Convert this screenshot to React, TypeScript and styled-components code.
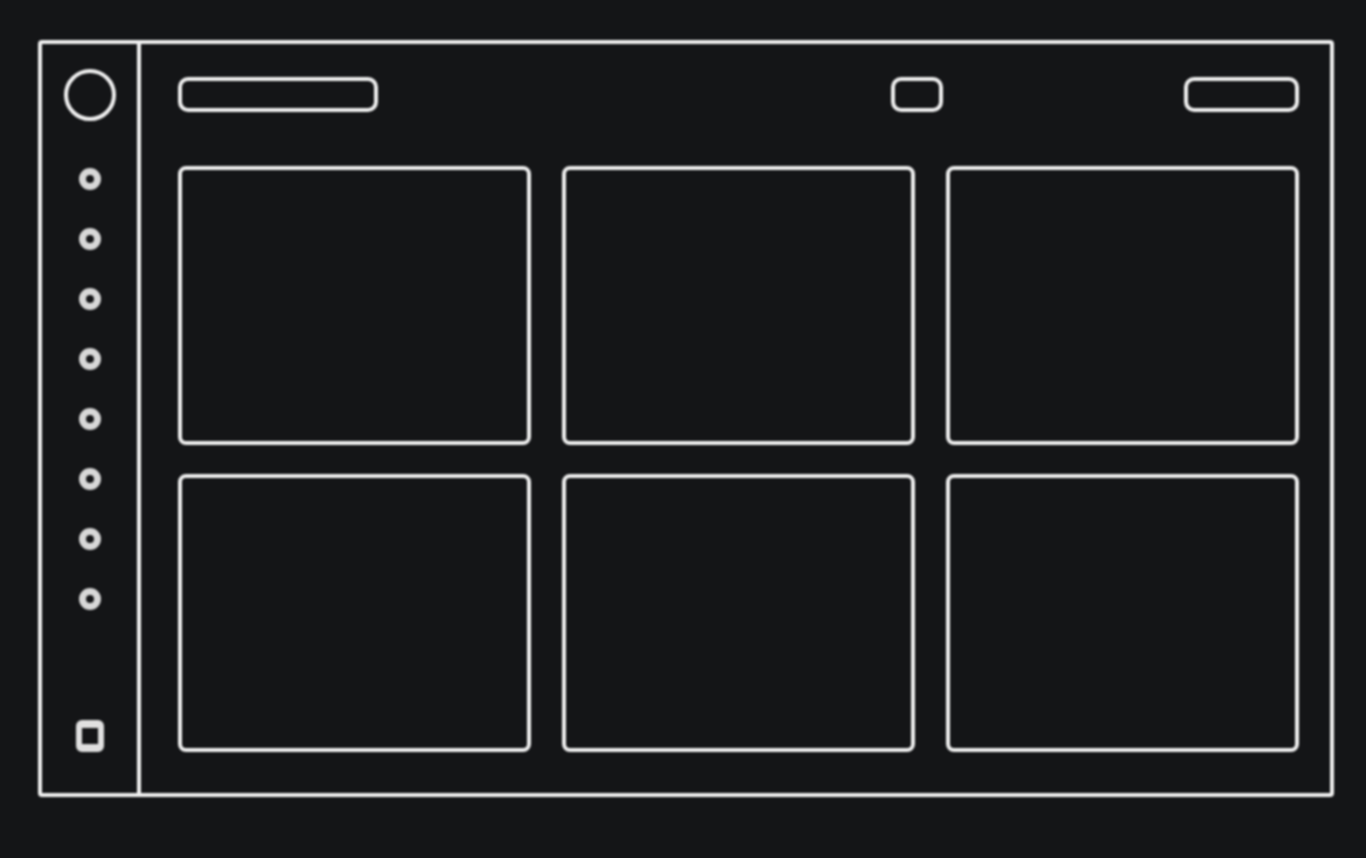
import React from 'react';
import styled, { createGlobalStyle } from 'styled-components';

const GlobalStyle = createGlobalStyle`
  html, body {
    margin: 0;
    padding: 0;
    background: #141517;
    font-family: "Liberation Sans", Arial, sans-serif;
  }
`;

const line = '#f0f0f0';

const Page = styled.div`
  width: 1366px;
  height: 858px;
  box-sizing: border-box;
  padding: 40px 32px 0 38px;
  background: #141517;
`;

const Frame = styled.div`
  width: 1296px;
  height: 757px;
  box-sizing: border-box;
  display: flex;
  border: 4px solid ${line};
  border-radius: 4px;
  filter: blur(0.8px);
`;

const Sidebar = styled.nav`
  width: 99px;
  flex-shrink: 0;
  box-sizing: border-box;
  border-right: 4px solid ${line};
  display: flex;
  flex-direction: column;
  align-items: center;
  padding: 25px 0 41px;
`;

const Avatar = styled.div`
  width: 52px;
  height: 52px;
  box-sizing: border-box;
  border-radius: 50%;
  border: 4px solid ${line};
  margin-bottom: 47px;
`;

const NavList = styled.div`
  display: flex;
  flex-direction: column;
  gap: 38px;
`;

const NavDot = styled.div`
  width: 22px;
  height: 22px;
  box-sizing: border-box;
  border-radius: 50%;
  border: 7px solid #d8d8d8;
`;

const SettingsButton = styled.div`
  margin-top: auto;
  width: 28px;
  height: 32px;
  box-sizing: border-box;
  border-radius: 6px;
  border: 6px solid #e0e0e0;
  border-top-width: 8px;
  border-bottom-width: 8px;
`;

const Main = styled.main`
  flex: 1;
  display: flex;
  flex-direction: column;
  padding: 33px 31px 41px 37px;
`;

const Header = styled.header`
  display: flex;
  align-items: center;
  height: 35px;
  margin-bottom: 54px;
`;

const Pill = styled.div<{ $w: number }>`
  width: ${p => p.$w}px;
  height: 35px;
  box-sizing: border-box;
  border: 4px solid ${line};
  border-radius: 10px;
`;

const HeaderActions = styled.div`
  margin-left: auto;
  display: flex;
  align-items: center;
  gap: 241px;
`;

const Grid = styled.section`
  flex: 1;
  display: grid;
  grid-template-columns: repeat(3, 1fr);
  grid-template-rows: repeat(2, 1fr);
  column-gap: 31px;
  row-gap: 29px;
`;

const Card = styled.div`
  box-sizing: border-box;
  border: 4px solid ${line};
  border-radius: 8px;
`;

export default function App() {
  return (
    <>
      <GlobalStyle />
      <Page>
        <Frame>
          <Sidebar>
            <Avatar />
            <NavList>
              {Array.from({ length: 8 }).map((_, i) => (
                <NavDot key={i} />
              ))}
            </NavList>
            <SettingsButton />
          </Sidebar>
          <Main>
            <Header>
              <Pill $w={200} />
              <HeaderActions>
                <Pill $w={52} />
                <Pill $w={115} />
              </HeaderActions>
            </Header>
            <Grid>
              {Array.from({ length: 6 }).map((_, i) => (
                <Card key={i} />
              ))}
            </Grid>
          </Main>
        </Frame>
      </Page>
    </>
  );
}
